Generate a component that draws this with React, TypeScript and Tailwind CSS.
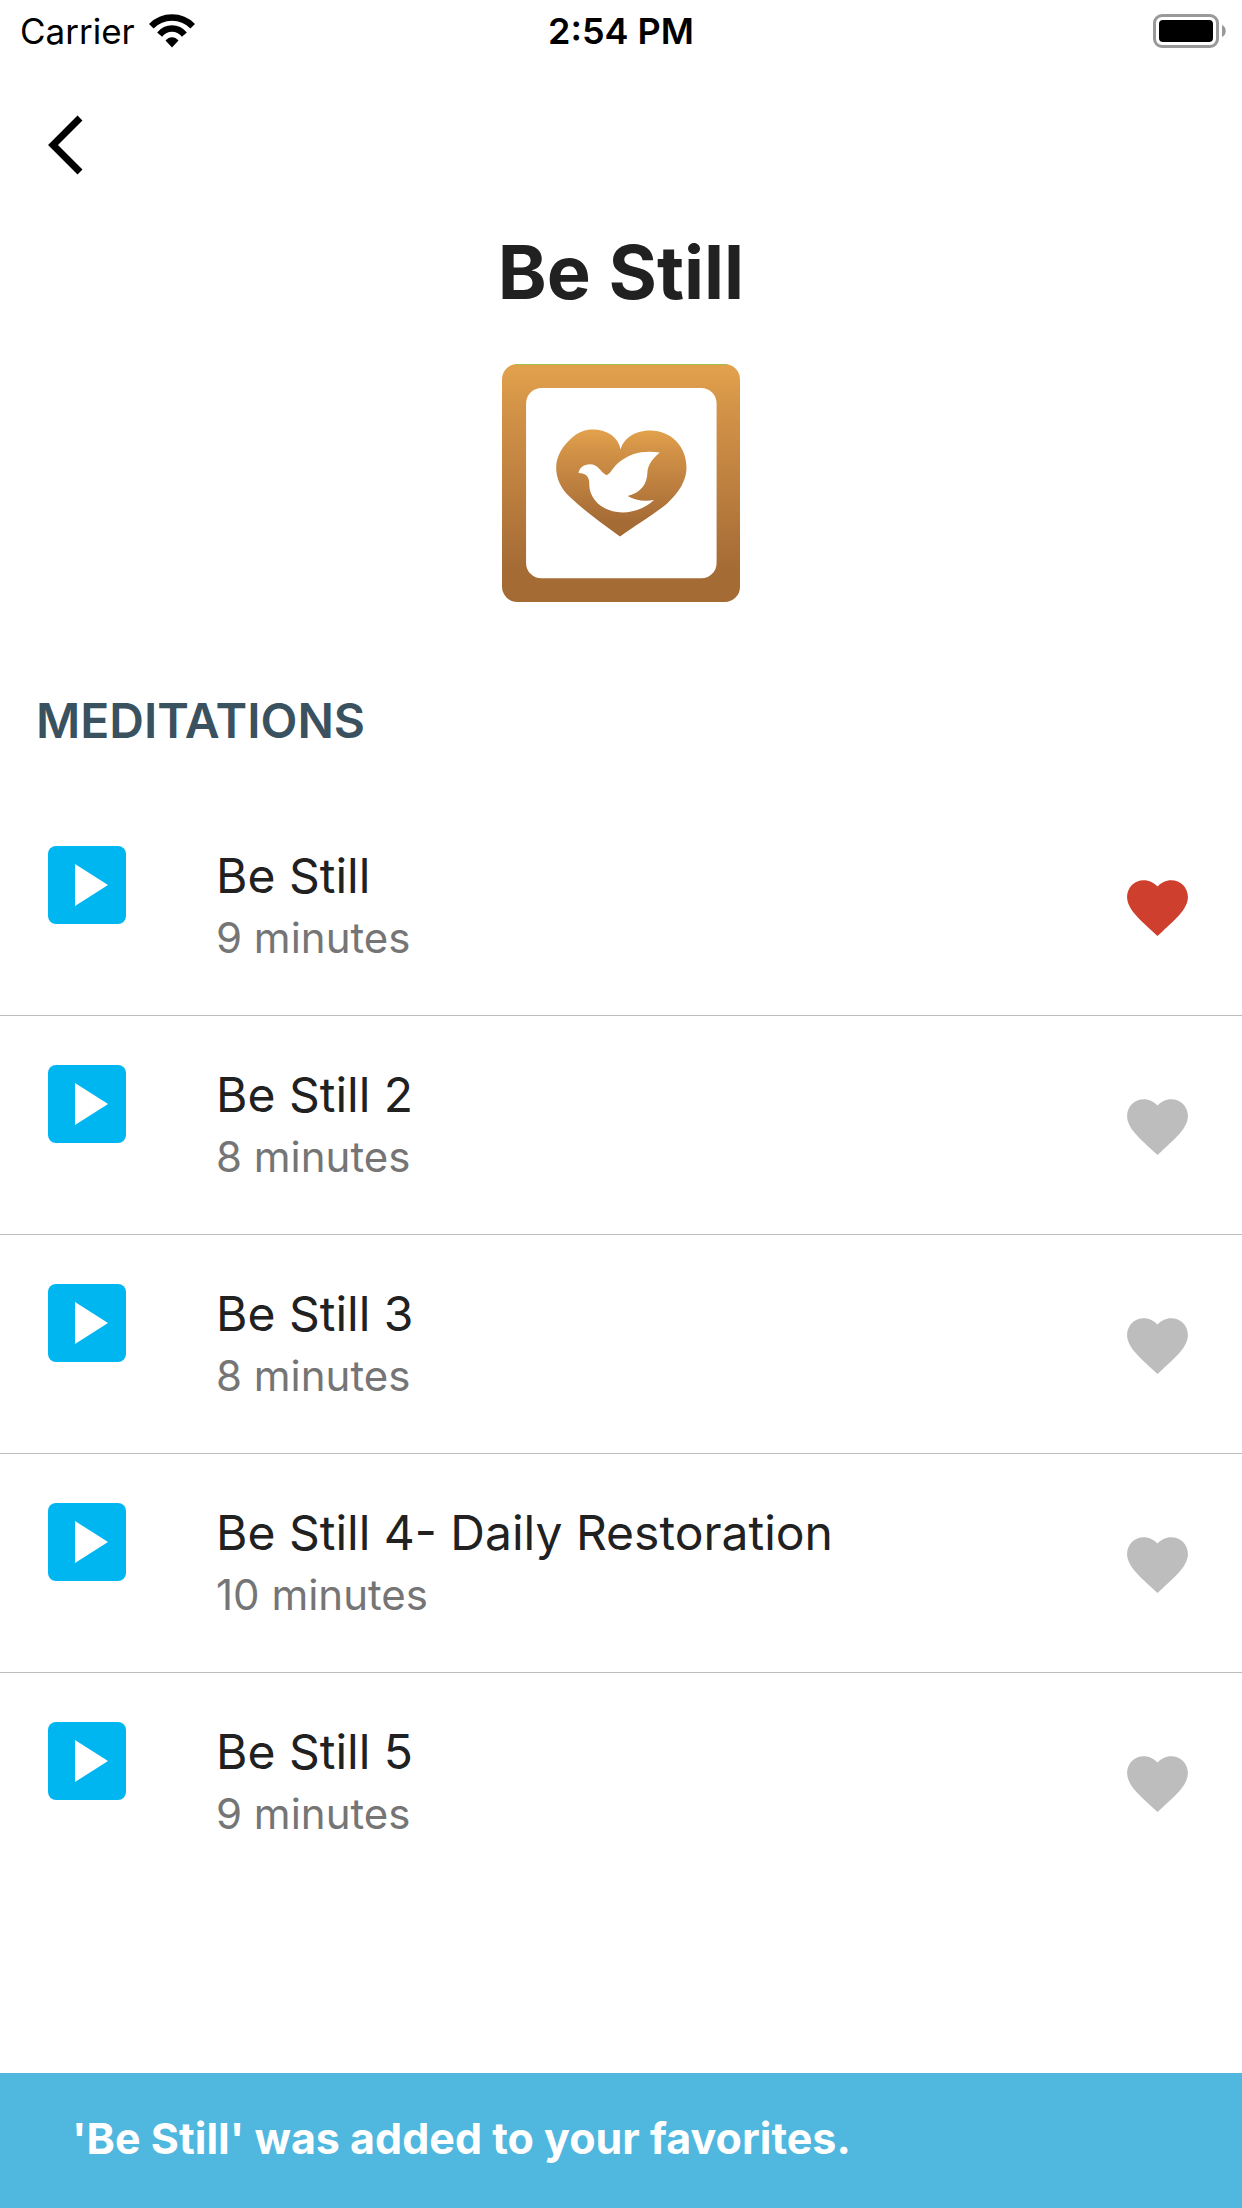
import { useState } from "react";

type Meditation = { title: string; duration: string };

const meditations: Meditation[] = [
  { title: "Be Still", duration: "9 minutes" },
  { title: "Be Still 2", duration: "8 minutes" },
  { title: "Be Still 3", duration: "8 minutes" },
  { title: "Be Still 4- Daily Restoration", duration: "10 minutes" },
  { title: "Be Still 5", duration: "9 minutes" },
];

function WifiIcon() {
  return (
    <svg width="46" height="34" viewBox="0 0 46 34" aria-hidden="true">
      <g fill="none" stroke="#000" strokeWidth="6.5">
        <path d="M2.3 12.2C13.8 .6 32.2 .6 43.7 12.2" />
        <path d="M10.6 20.6C17.4 12.6 28.6 12.6 35.4 20.6" />
      </g>
      <path d="M16.5 26.5C20.2 22 25.8 22 29.5 26.5L23 33.5Z" />
    </svg>
  );
}

function BatteryIcon() {
  return (
    <svg width="74" height="34" viewBox="0 0 74 34" aria-label="Battery full" role="img">
      <rect x="2.5" y="1.5" width="63" height="31" rx="7.5" fill="none" stroke="#999" strokeWidth="3" />
      <rect x="7" y="6" width="54" height="22" rx="4" />
      <path d="M70 11C75 13 75 21 70 23Z" fill="#999" />
    </svg>
  );
}

function StatusBar() {
  return (
    <header className="grid h-[62px] grid-cols-3 items-center px-4 text-4xl text-black">
      <div className="flex items-center gap-3.5 pl-1">
        <span className="text-[35px]">Carrier</span>
        <WifiIcon />
      </div>
      <span className="text-center font-semibold">2:54 PM</span>
      <div className="flex justify-end">
        <BatteryIcon />
      </div>
    </header>
  );
}

function DoveLogo() {
  return (
    <svg width="238" height="238" viewBox="36 42 712 712" className="mx-auto" role="img" aria-label="Dove in a heart">
      <defs>
        <linearGradient id="frame" x1="0" y1="0" x2="0" y2="1">
          <stop offset="0" stopColor="#e2a24c" />
          <stop offset="0.2" stopColor="#d29247" />
          <stop offset="0.85" stopColor="#a66c36" />
          <stop offset="1" stopColor="#a36a34" />
        </linearGradient>
      </defs>
      <rect x="36" y="42" width="712" height="712" rx="46" fill="url(#frame)" />
      <path d="M76 43.5H708" stroke="#9cc04a" strokeWidth="3" />
      <rect x="108" y="114" width="570" height="569" rx="46" fill="#fff" />
      <path
        fill="url(#frame)"
        d="M391 298C400 262 437 241 480 241C543 241 588 290 588 352C588 389 567 426 530 459C494 490 439 522 389 558C336 520 283 482 237 438C212 414 198 385 198 352C198 318 218 286 246 262C266 245 285 238 307 238C353 238 384 262 391 298Z"
      />
      <path
        fill="#fff"
        d="M265 368C267 353 280 342 299 342C324 342 330 365 349 375C365 367 367 350 389 334C423 307 462 300 508 307C486 326 473 342 471 366C471 402 450 428 412 437C433 450 461 454 491 449C464 473 430 486 396 486C340 486 297 449 297 402C298 380 288 368 265 368Z"
      />
    </svg>
  );
}

function MeditationRow({
  item,
  favorite,
  onToggle,
}: {
  item: Meditation;
  favorite: boolean;
  onToggle: () => void;
}) {
  return (
    <li className="flex h-[219px] items-center border-b border-[#bcbcbc] px-12 last:border-transparent">
      <button
        type="button"
        aria-label={`Play ${item.title}`}
        className="mt-[49px] size-[78px] shrink-0 self-start rounded-lg bg-[#00b6f1]"
      >
        <svg viewBox="0 0 78 78" fill="#fff" aria-hidden="true">
          <path d="M27 18L60 39L27 60Z" />
        </svg>
      </button>
      <div className="ml-[90px] flex-1">
        <h3 className="text-5xl leading-[64px] text-[#212121]">{item.title}</h3>
        <p className="text-[42px] leading-[60px] text-[#757575]">{item.duration}</p>
      </div>
      <button
        type="button"
        aria-label={`Favorite ${item.title}`}
        aria-pressed={favorite}
        onClick={onToggle}
        className={favorite ? "pt-0.5 text-[#cf3f2e]" : "pt-0.5 text-[#bdbdbd]"}
      >
        <svg className="size-[73px]" viewBox="0 0 24 24" fill="currentColor" aria-hidden="true">
          <path d="M12 21.35l-1.45-1.32C5.4 15.36 2 12.28 2 8.5 2 5.42 4.42 3 7.5 3c1.74 0 3.41.81 4.5 2.09C13.09 3.81 14.76 3 16.5 3 19.58 3 22 5.42 22 8.5c0 3.78-3.4 6.86-8.55 11.54L12 21.35z" />
        </svg>
      </button>
    </li>
  );
}

export default function App() {
  const [favorites, setFavorites] = useState<string[]>(["Be Still"]);

  const toggle = (title: string) =>
    setFavorites((current) =>
      current.includes(title) ? current.filter((t) => t !== title) : [...current, title],
    );

  return (
    <div className="flex min-h-screen flex-col bg-white font-[Inter,'Liberation_Sans',sans-serif]">
      <StatusBar />
      <nav className="flex h-[166px] items-center px-12">
        <button type="button" aria-label="Back">
          <svg width="36" height="60" viewBox="0 0 36 60" fill="none" stroke="#000" strokeWidth="7" aria-hidden="true">
            <path d="M32 3L5 30L32 57" />
          </svg>
        </button>
      </nav>
      <main className="flex-1">
        <h1 className="text-center text-[74px] leading-[88px] font-bold text-[#212121]">Be Still</h1>
        <div className="mt-12">
          <DoveLogo />
        </div>
        <h2 className="mt-[87px] px-9 text-5xl leading-[64px] font-semibold text-[#3a5160]">MEDITATIONS</h2>
        <ul className="mt-11">
          {meditations.map((item) => (
            <MeditationRow
              key={item.title}
              item={item}
              favorite={favorites.includes(item.title)}
              onToggle={() => toggle(item.title)}
            />
          ))}
        </ul>
      </main>
      <div role="status" className="flex h-[135px] items-center bg-[#50b7df] px-[72px] pb-1 text-[43px] font-bold text-white">
        'Be Still' was added to your favorites.
      </div>
    </div>
  );
}
